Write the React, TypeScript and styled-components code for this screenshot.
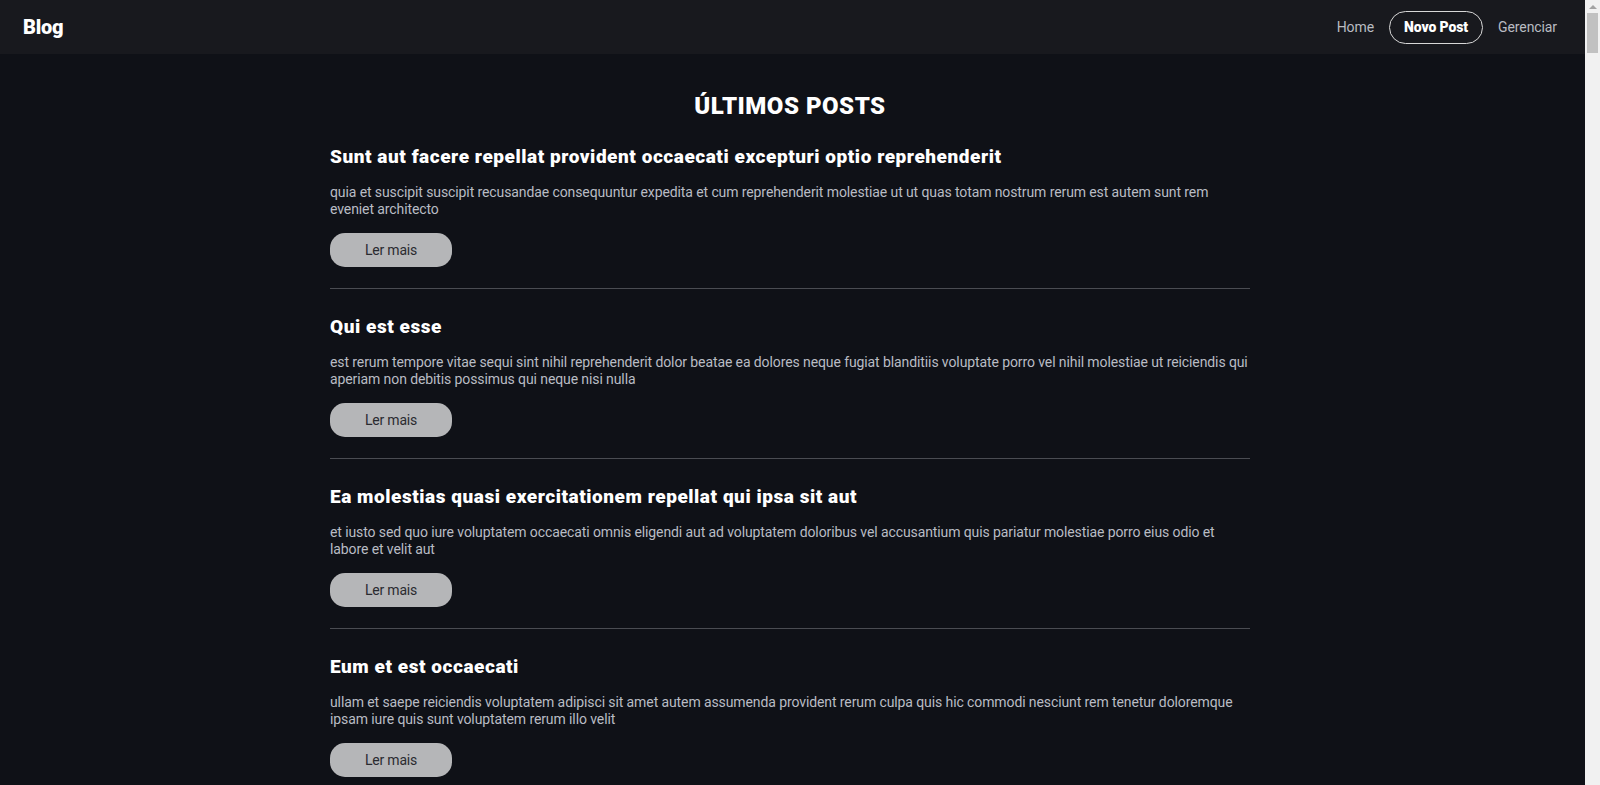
import React from "react";
import styled, { createGlobalStyle } from "styled-components";

const GlobalStyle = createGlobalStyle`
  html, body { margin: 0; padding: 0; background: #0f1117; }
  body { font-family: Roboto, "Noto Sans", sans-serif; color: #fff; }
  * { box-sizing: border-box; }
`;

const Page = styled.div`
  margin-right: 15px;
`;

const ScrollTrack = styled.div`
  position: fixed;
  top: 0;
  right: 0;
  bottom: 0;
  width: 15px;
  background: #f1f1f1;
  display: flex;
  flex-direction: column;
  align-items: center;
`;

const ScrollArrow = styled.div`
  margin-top: 5px;
  width: 0;
  height: 0;
  border-left: 4px solid transparent;
  border-right: 4px solid transparent;
  border-bottom: 4px solid #a3a3a3;
`;

const ScrollThumb = styled.div`
  margin-top: 4px;
  width: 11px;
  height: 40px;
  background: #c1c1c1;
`;

const Header = styled.header`
  height: 54px;
  background: #18191e;
  display: flex;
  align-items: center;
  justify-content: space-between;
  padding: 0 13px 0 23px;
`;

const Logo = styled.div`
  font-size: 20px;
  font-weight: 900;
  letter-spacing: -0.2px;
  color: #fff;
`;

const Nav = styled.nav`
  display: flex;
  align-items: center;
  gap: 0;
`;

const NavLink = styled.a<{ $active?: boolean }>`
  display: flex;
  align-items: center;
  height: 33px;
  padding: 0 14px;
  border-radius: 17px;
  font-size: 14px;
  letter-spacing: -0.1px;
  text-decoration: none;
  color: ${(p) => (p.$active ? "#fff" : "#b9bcc2")};
  font-weight: ${(p) => (p.$active ? 900 : 400)};
  border: 1px solid ${(p) => (p.$active ? "#d8d8d8" : "transparent")};
`;

const ContentWrap = styled.div`
  padding-right: 5px;
`;

const Main = styled.main`
  max-width: 920px;
  margin: 0 auto;
  padding: 38px 0 40px;
`;

const PageTitle = styled.h1`
  margin: 0 0 24px;
  text-align: center;
  font-size: 24px;
  line-height: 29px;
  font-weight: 900;
  letter-spacing: 0.5px;
  color: #fff;
`;

const Post = styled.article`
  padding-bottom: 21px;
  border-bottom: 1px solid #4a4c52;
  margin-bottom: 26px;
`;

const PostTitle = styled.h2`
  margin: 0 0 15px;
  font-size: 19px;
  line-height: 24px;
  font-weight: 900;
  letter-spacing: 0.55px;
  color: #fff;
`;

const PostBody = styled.p`
  margin: 0 0 15px;
  font-size: 14px;
  line-height: 17px;
  letter-spacing: -0.1px;
  color: #b9bcc4;
`;

const ReadMore = styled.button`
  width: 122px;
  height: 34px;
  border: none;
  border-radius: 15px;
  background: #b5b6b8;
  color: #2a2b30;
  font-family: inherit;
  font-size: 14px;
  letter-spacing: -0.2px;
  cursor: pointer;
`;

const posts = [
  {
    title: "Sunt aut facere repellat provident occaecati excepturi optio reprehenderit",
    body: "quia et suscipit suscipit recusandae consequuntur expedita et cum reprehenderit molestiae ut ut quas totam nostrum rerum est autem sunt rem eveniet architecto",
  },
  {
    title: "Qui est esse",
    body: "est rerum tempore vitae sequi sint nihil reprehenderit dolor beatae ea dolores neque fugiat blanditiis voluptate porro vel nihil molestiae ut reiciendis qui aperiam non debitis possimus qui neque nisi nulla",
  },
  {
    title: "Ea molestias quasi exercitationem repellat qui ipsa sit aut",
    body: "et iusto sed quo iure voluptatem occaecati omnis eligendi aut ad voluptatem doloribus vel accusantium quis pariatur molestiae porro eius odio et labore et velit aut",
  },
  {
    title: "Eum et est occaecati",
    body: "ullam et saepe reiciendis voluptatem adipisci sit amet autem assumenda provident rerum culpa quis hic commodi nesciunt rem tenetur doloremque ipsam iure quis sunt voluptatem rerum illo velit",
  },
  {
    title: "Nesciunt quas odio",
    body: "repudiandae veniam quaerat sunt sed alias aut fugiat sit autem sed est voluptatem omnis possimus esse voluptatibus quis est aut tenetur dolor neque",
  },
  {
    title: "Dolorem eum magni eos aperiam quia",
    body: "ut aspernatur corporis harum nihil quis provident sequi mollitia nobis aliquid molestiae perspiciatis et ea nemo ab reprehenderit accusantium quas voluptate dolores velit et doloremque molestiae",
  },
];

export default function App() {
  return (
    <>
      <GlobalStyle />
      <Page>
        <Header>
          <Logo>Blog</Logo>
          <Nav>
            <NavLink href="#">Home</NavLink>
            <NavLink href="#" $active>
              Novo Post
            </NavLink>
            <NavLink href="#">Gerenciar</NavLink>
          </Nav>
        </Header>
        <ContentWrap>
          <Main>
            <PageTitle>ÚLTIMOS POSTS</PageTitle>
            {posts.map((p) => (
              <Post key={p.title}>
                <PostTitle>{p.title}</PostTitle>
                <PostBody>{p.body}</PostBody>
                <ReadMore>Ler mais</ReadMore>
              </Post>
            ))}
          </Main>
        </ContentWrap>
      </Page>
      <ScrollTrack aria-hidden>
        <ScrollArrow />
        <ScrollThumb />
      </ScrollTrack>
    </>
  );
}
